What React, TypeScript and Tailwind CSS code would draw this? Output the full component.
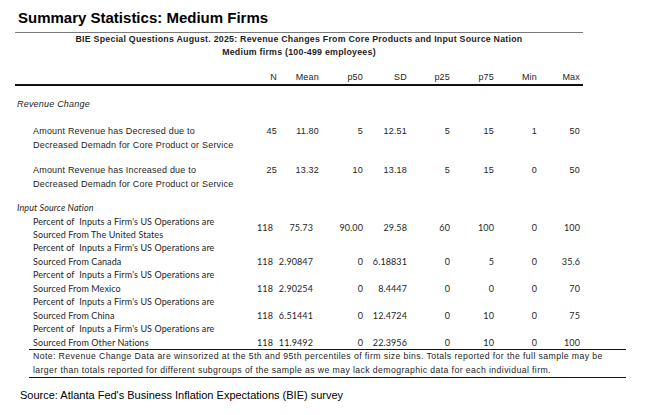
const upperCols = "grid grid-cols-[232px_30px_42px_44px_44px_43px_44px_43px_43px]";
const lowerCols = "grid grid-cols-[232px_26px_40px_50px_44px_43px_44px_43px_43px]";

const upperFont = "font-['Liberation_Sans',Arial,sans-serif] text-[9px] tracking-[0.2px]";
const lowerFont = "font-['Lato','Liberation_Sans',sans-serif] text-[9px] tracking-[0.1px]";

const headers = ["N", "Mean", "p50", "SD", "p25", "p75", "Min", "Max"];

const revenueRows = [
  {
    label: ["Amount Revenue has Decresed due to", "Decreased Demadn for Core Product or Service"],
    values: ["45", "11.80", "5", "12.51", "5", "15", "1", "50"],
  },
  {
    label: ["Amount Revenue has Increased due to", "Decreased Demadn for Core Product or Service"],
    values: ["25", "13.32", "10", "13.18", "5", "15", "0", "50"],
  },
];

const sourceRows = [
  { place: "Canada", values: ["118", "2.90847", "0", "6.18831", "0", "5", "0", "35.6"] },
  { place: "Mexico", values: ["118", "2.90254", "0", "8.4447", "0", "0", "0", "70"] },
  { place: "China", values: ["118", "6.51441", "0", "12.4724", "0", "10", "0", "75"] },
  { place: "Other Nations", values: ["118", "11.9492", "0", "22.3956", "0", "10", "0", "100"] },
];

export default function App() {
  return (
    <div className="w-[650px] h-[415px] bg-white overflow-hidden text-[#1e1e1e]">
      <h1 className="pl-[18px] pt-[9px] text-[15px] leading-[18px] font-bold font-['Liberation_Sans',Arial,sans-serif] text-black">
        Summary Statistics: Medium Firms
      </h1>

      <div className="ml-[15px] w-[568px] mt-[5px] border-t border-[#7a7a7a]">
        <div className="text-center font-bold font-['Liberation_Sans',Arial,sans-serif] text-[8.8px] leading-[13px] tracking-[0.25px]">
          <p>BIE Special Questions August. 2025: Revenue Changes From Core Products and Input Source Nation</p>
          <p>Medium firms (100-499 employees)</p>
        </div>

        <div className={`${upperCols} ${upperFont} mt-[12px] h-[15px] leading-[13px] border-b-2 border-[#111]`}>
          <div />
          {headers.map((h) => (
            <div key={h} className="text-right">
              {h}
            </div>
          ))}
        </div>

        <p className={`${upperFont} italic pl-[2px] mt-[12px] leading-[12px]`}>Revenue Change</p>

        {revenueRows.map((row, i) => (
          <div
            key={i}
            className={`${upperCols} ${upperFont} leading-[14px] ${i === 0 ? "mt-[14px]" : "mt-[11px]"}`}
          >
            <div className="pl-[18px] whitespace-nowrap">
              {row.label[0]}
              <br />
              {row.label[1]}
            </div>
            {row.values.map((v, j) => (
              <div key={j} className="text-right">
                {v}
              </div>
            ))}
          </div>
        ))}

        <p className={`${lowerFont} italic pl-[2px] mt-[11px] leading-[12px]`}>Input Source Nation</p>

        <div className={`${lowerCols} ${lowerFont} mt-[2px] leading-[12.5px] items-center`}>
          <div className="pl-[18px] whitespace-nowrap">
            Percent of&nbsp; Inputs a Firm's US Operations are
            <br />
            Sourced From The United States
          </div>
          {["118", "75.73", "90.00", "29.58", "60", "100", "0", "100"].map((v, j) => (
            <div key={j} className="text-right">
              {v}
            </div>
          ))}
        </div>

        {sourceRows.map((row) => (
          <div key={row.place} className={`${lowerCols} ${lowerFont} leading-[13.5px] items-end`}>
            <div className="pl-[18px] whitespace-nowrap">
              Percent of&nbsp; Inputs a Firm's US Operations are
              <br />
              Sourced From {row.place}
            </div>
            {row.values.map((v, j) => (
              <div key={j} className="text-right">
                {v}
              </div>
            ))}
          </div>
        ))}
      </div>

      <div className="ml-[29px] w-[597px] border-y border-[#111] pl-[4px] font-['Liberation_Sans',Arial,sans-serif] text-[8.7px] leading-[13.5px] tracking-[0.4px] whitespace-nowrap">
        <p>
          Note: Revenue Change Data are winsorized at the 5th and 95th percentiles of firm size bins. Totals reported
          for the full sample may be
        </p>
        <p>
          larger than totals reported for different subgroups of the sample as we may lack demographic data for each
          individual firm.
        </p>
      </div>

      <p className="pl-[20px] mt-[10px] text-[11px] leading-[14px] font-['Liberation_Sans',Arial,sans-serif] text-black">
        Source: Atlanta Fed's Business Inflation Expectations (BIE) survey
      </p>
    </div>
  );
}
